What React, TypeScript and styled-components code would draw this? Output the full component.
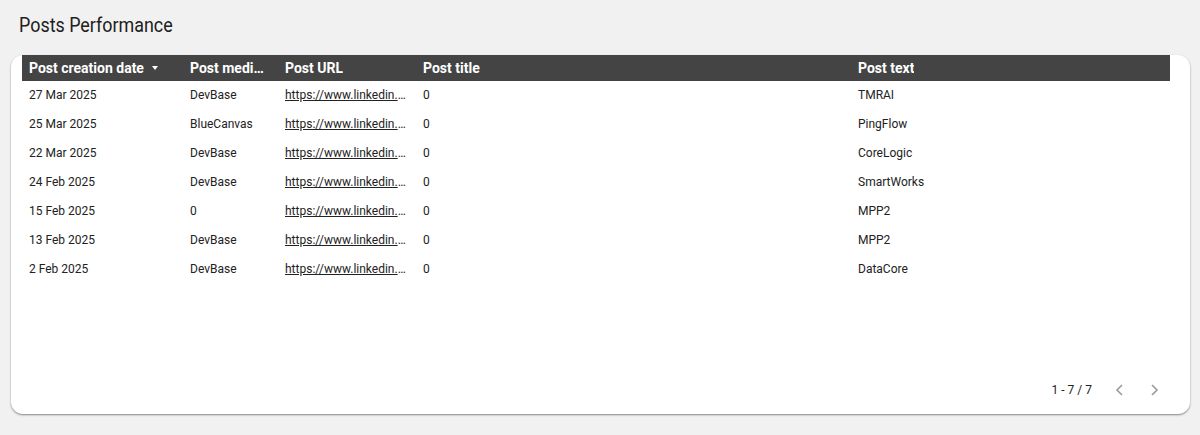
import React from "react";
import styled, { createGlobalStyle } from "styled-components";

const Global = createGlobalStyle`
  html, body { margin: 0; padding: 0; background: #f1f1f1; }
  body { font-family: Roboto, "Liberation Sans", sans-serif; color: #222; }
`;

const Page = styled.div`
  width: 1200px;
  height: 435px;
  box-sizing: border-box;
  padding: 12px 10px 0 11px;
  display: flex;
  flex-direction: column;
`;

const Title = styled.h1`
  margin: 0 0 0 8px;
  height: 26px;
  font-size: 20px;
  font-weight: 400;
  line-height: 26px;
  color: #202020;
  transform: scaleX(0.895);
  transform-origin: left center;
  white-space: nowrap;
`;

const Card = styled.div`
  margin-top: 17px;
  height: 359px;
  background: #fff;
  border-radius: 12px;
  box-shadow: 0 1px 2px rgba(0, 0, 0, 0.45);
  box-sizing: border-box;
  padding: 0 20px 0 11px;
  display: flex;
  flex-direction: column;
`;

const Table = styled.div`
  display: grid;
  grid-template-columns: 161px 95px 138px 435px 1fr;
`;

const HeadCell = styled.div`
  background: #444444;
  color: #fff;
  font-size: 14px;
  font-weight: 700;
  height: 26px;
  padding: 0 7px;
  white-space: nowrap;
  overflow: hidden;
  display: flex;
  align-items: center;
  gap: 8px;
  min-width: 0;
`;

const HeadLabel = styled.span`
  overflow: hidden;
  text-overflow: ellipsis;
  line-height: 27px;
`;

const SortArrow = styled.span`
  width: 0;
  height: 0;
  border-left: 3px solid transparent;
  border-right: 3px solid transparent;
  border-top: 4px solid #fff;
  flex: none;
`;

const Cell = styled.div`
  height: 29px;
  line-height: 29px;
  font-size: 12px;
  padding: 0 7px;
  white-space: nowrap;
  overflow: hidden;
  text-overflow: ellipsis;
  color: #222;
  min-width: 0;
`;

const Link = styled.a`
  display: block;
  color: #222;
  text-decoration: underline;
  overflow: hidden;
  text-overflow: ellipsis;
  white-space: nowrap;
`;

const Footer = styled.div`
  margin-top: auto;
  height: 24px;
  margin-bottom: 12px;
  margin-right: 3px;
  display: flex;
  align-items: center;
  justify-content: flex-end;
  font-size: 12px;
  color: #222;
`;

const PageInfo = styled.span`
  margin-right: 3px;
`;

const NavBtn = styled.button`
  border: none;
  background: none;
  padding: 0;
  width: 24px;
  height: 24px;
  margin-left: 12px;
  display: flex;
  align-items: center;
  justify-content: center;
  color: #9a9a9a;
`;

const rows = [
  ["27 Mar 2025", "DevBase", "0", "TMRAI"],
  ["25 Mar 2025", "BlueCanvas", "0", "PingFlow"],
  ["22 Mar 2025", "DevBase", "0", "CoreLogic"],
  ["24 Feb 2025", "DevBase", "0", "SmartWorks"],
  ["15 Feb 2025", "0", "0", "MPP2"],
  ["13 Feb 2025", "DevBase", "0", "MPP2"],
  ["2 Feb 2025", "DevBase", "0", "DataCore"],
];

const Chevron = ({ dir }: { dir: "left" | "right" }) => (
  <svg width="10" height="12" viewBox="0 0 10 12" fill="none" stroke="currentColor" strokeWidth="1.6">
    {dir === "left" ? <path d="M8 1L3 6l5 5" /> : <path d="M2 1l5 5-5 5" />}
  </svg>
);

export default function App() {
  return (
    <Page>
      <Global />
      <Title>Posts Performance</Title>
      <Card>
        <Table>
          <HeadCell>
            <HeadLabel>Post creation date</HeadLabel>
            <SortArrow />
          </HeadCell>
          <HeadCell>
            <HeadLabel>Post medium</HeadLabel>
          </HeadCell>
          <HeadCell>
            <HeadLabel>Post URL</HeadLabel>
          </HeadCell>
          <HeadCell>
            <HeadLabel>Post title</HeadLabel>
          </HeadCell>
          <HeadCell>
            <HeadLabel>Post text</HeadLabel>
          </HeadCell>
          {rows.map((r, i) => (
            <React.Fragment key={i}>
              <Cell>{r[0]}</Cell>
              <Cell>{r[1]}</Cell>
              <Cell>
                <Link href="#">https://www.linkedin.com/feed/update/urn:li:activity</Link>
              </Cell>
              <Cell>{r[2]}</Cell>
              <Cell>{r[3]}</Cell>
            </React.Fragment>
          ))}
        </Table>
        <Footer>
          <PageInfo>1 - 7 / 7</PageInfo>
          <NavBtn aria-label="previous">
            <Chevron dir="left" />
          </NavBtn>
          <NavBtn aria-label="next">
            <Chevron dir="right" />
          </NavBtn>
        </Footer>
      </Card>
    </Page>
  );
}
